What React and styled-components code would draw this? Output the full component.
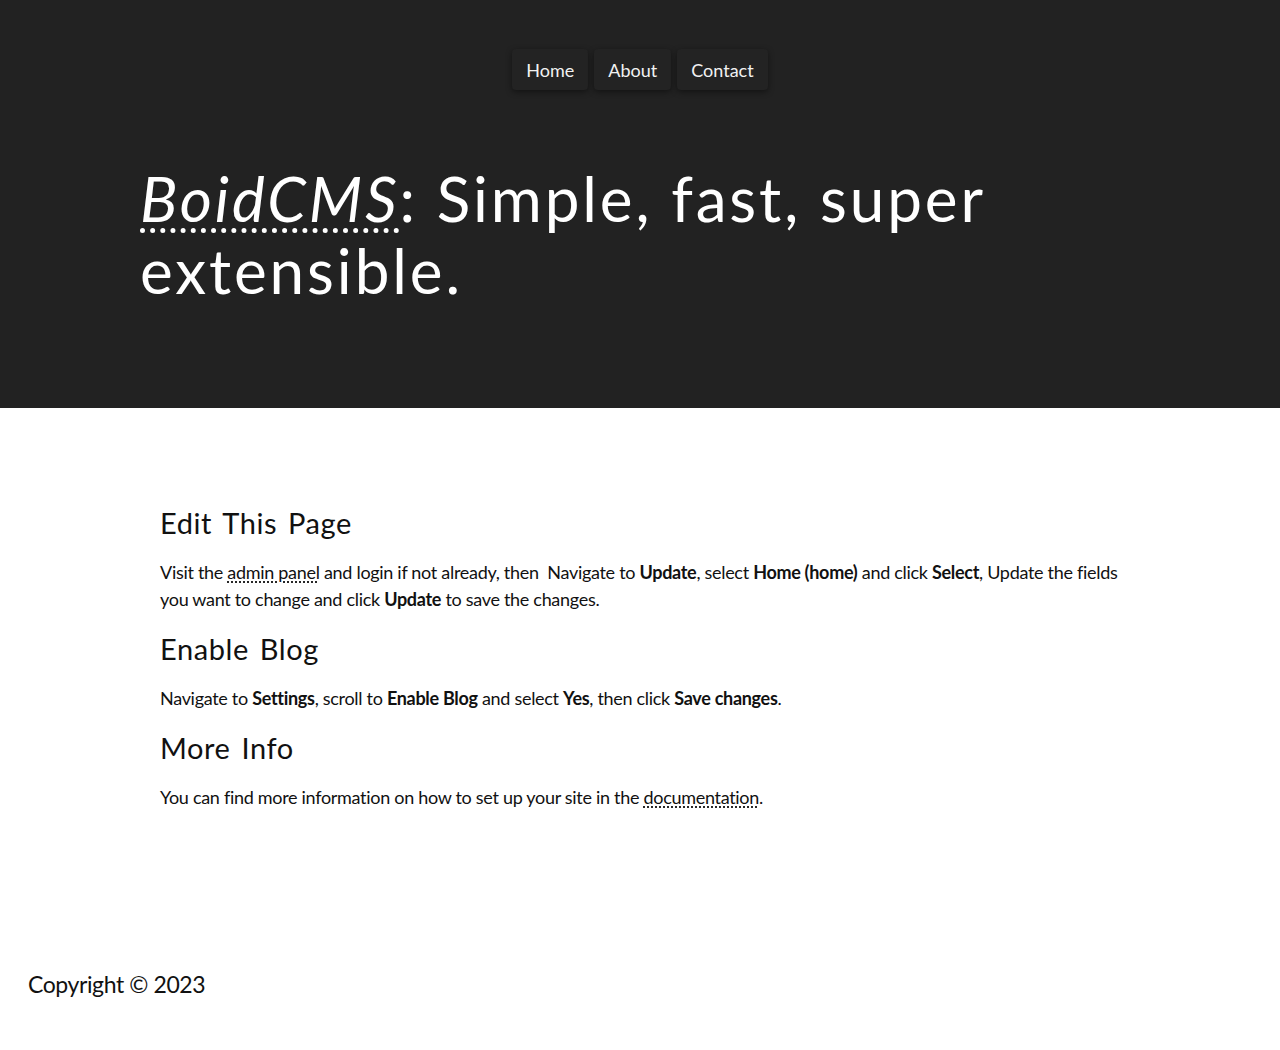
import React from "react";
import styled, { createGlobalStyle } from "styled-components";

const GlobalStyle = createGlobalStyle`
  html, body {
    margin: 0;
    padding: 0;
    background: #fff;
  }
  body {
    font-family: Lato, "Noto Sans", sans-serif;
    color: #111;
  }
`;

const Header = styled.header`
  background: #222;
  height: 408px;
  box-sizing: border-box;
  padding-top: 49px;
`;

const Nav = styled.nav`
  display: flex;
  justify-content: center;
  gap: 6px;
`;

const NavLink = styled.a`
  display: flex;
  align-items: center;
  height: 41px;
  padding: 0 14px;
  border-radius: 4px;
  background: #232323;
  box-shadow: 0 2px 6px rgba(0, 0, 0, 0.45);
  color: #f2f2f2;
  font-size: 18px;
  text-decoration: none;
`;

const Title = styled.h1`
  max-width: 1000px;
  margin: 72px auto 0;
  color: #fff;
  font-size: 62px;
  font-weight: 400;
  line-height: 72px;
  letter-spacing: 2.9px;
`;

const Abbr = styled.abbr`
  font-style: italic;
  text-decoration: underline dotted;
  text-decoration-thickness: 5px;
  text-underline-offset: 6px;
`;

const Main = styled.main`
  max-width: 960px;
  margin: 0 auto;
  padding: 96px 0 142px;
`;

const Heading = styled.h2`
  margin: 0;
  font-size: 29px;
  font-weight: 400;
  line-height: 38px;
  letter-spacing: 0.02em;
  word-spacing: 3px;
`;

const Para = styled.p`
  margin: 17px 0;
  font-size: 18px;
  line-height: 27px;
  letter-spacing: -0.3px;
`;

const Link = styled.a`
  color: inherit;
  text-decoration: underline dotted;
  text-underline-offset: 3px;
`;

const Footer = styled.footer`
  padding: 0 28px;
  font-size: 23px;
  line-height: 29px;
  letter-spacing: -0.4px;
`;

export default function App() {
  return (
    <>
      <GlobalStyle />
      <Header>
        <Nav>
          <NavLink href="#">Home</NavLink>
          <NavLink href="#">About</NavLink>
          <NavLink href="#">Contact</NavLink>
        </Nav>
        <Title>
          <Abbr title="BoidCMS">BoidCMS</Abbr>: Simple, fast, super extensible.
        </Title>
      </Header>
      <Main>
        <Heading>Edit This Page</Heading>
        <Para>
          Visit the <Link href="#">admin panel</Link> and login if not already,
          then&nbsp; Navigate to <b>Update</b>, select <b>Home (home)</b> and
          click <b>Select</b>, Update the fields you want to change and click{" "}
          <b>Update</b> to save the changes.
        </Para>
        <Heading>Enable Blog</Heading>
        <Para>
          Navigate to <b>Settings</b>, scroll to <b>Enable Blog</b> and select{" "}
          <b>Yes</b>, then click <b>Save changes</b>.
        </Para>
        <Heading>More Info</Heading>
        <Para>
          You can find more information on how to set up your site in the{" "}
          <Link href="#">documentation</Link>.
        </Para>
      </Main>
      <Footer>Copyright © 2023</Footer>
    </>
  );
}
